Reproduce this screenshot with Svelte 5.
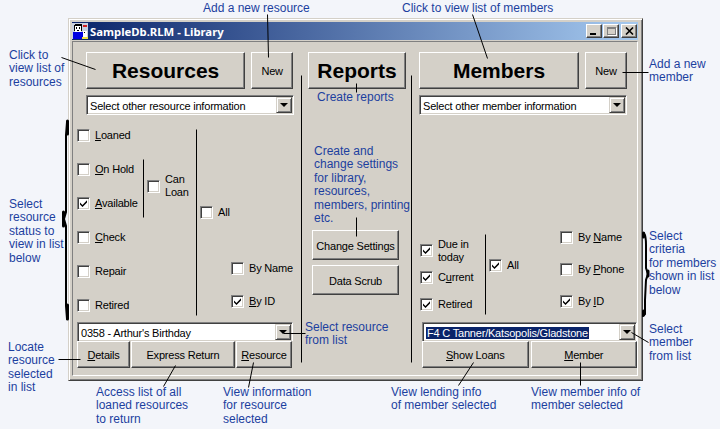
<script>
  const notes = [
    { x: 203, y: 2, text: 'Add a new resource' },
    { x: 402, y: 2, text: 'Click to view list of members' },
    { x: 9, y: 49, text: 'Click to\nview list of\nresources' },
    { x: 649, y: 58, text: 'Add a new\nmember' },
    { x: 317, y: 91, text: 'Create reports' },
    { x: 314, y: 145, text: 'Create and\nchange settings\nfor library,\nresources,\nmembers, printing\netc.' },
    { x: 9, y: 198, text: 'Select\nresource\nstatus to\nview in list\nbelow' },
    { x: 649, y: 230, text: 'Select\ncriteria\nfor members\nshown in list\nbelow' },
    { x: 305, y: 321, text: 'Select resource\nfrom list' },
    { x: 649, y: 323, text: 'Select\nmember\nfrom list' },
    { x: 8, y: 341, text: 'Locate\nresource\nselected\nin list' },
    { x: 96, y: 386, text: 'Access list of all\nloaned resources\nto return' },
    { x: 223, y: 386, text: 'View information\nfor resource\nselected' },
    { x: 391, y: 386, text: 'View lending info\nof member selected' },
    { x: 531, y: 386, text: 'View member info of\nmember selected' }
  ];

  // leader lines, x1 y1 x2 y2
  const leaders = [
    [61, 57, 95, 69],
    [267, 14, 268, 57],
    [472, 14, 487, 58],
    [622, 72, 648, 72],
    [356, 83, 356, 92],
    [356, 217, 356, 236],
    [283, 333, 305, 333],
    [58, 359, 80, 359],
    [175, 365, 163, 386],
    [253, 362, 248, 387],
    [473, 362, 458, 385],
    [580, 362, 580, 385],
    [631, 332, 648, 342],
    [143, 159, 143, 217],
    [196, 129, 196, 315],
    [485, 234, 485, 314],
    [301, 75, 301, 362],
    [411, 75, 411, 362]
  ];
</script>

{#snippet box(checked = false)}
  <span class="box">
    {#if checked}
      <svg width="9" height="9" viewBox="0 0 9 9"><path d="M1 3.5 L3.5 6 L8 1.2 V3.4 L3.5 8 L1 5.6 Z" fill="#000" /></svg>
    {/if}
  </span>
{/snippet}

{#snippet arrow()}
  <span class="drop"><i></i></span>
{/snippet}

<div class="page">
  <div class="window">
    <div class="titlebar">
      <svg class="appicon" width="16" height="16" viewBox="0 0 16 16" shape-rendering="crispEdges">
        <rect width="16" height="16" fill="#c8d0e0" />
        <rect x="3" y="1" width="7" height="2" fill="#000" />
        <rect x="2" y="2" width="1" height="6" fill="#000" />
        <rect x="9" y="2" width="1" height="6" fill="#000" />
        <rect x="3" y="3" width="6" height="6" fill="#fff" />
        <rect x="4" y="4" width="1" height="2" fill="#000" />
        <rect x="7" y="4" width="1" height="2" fill="#000" />
        <rect x="5" y="7" width="2" height="1" fill="#000" />
        <rect x="1" y="9" width="10" height="7" fill="#0000e0" />
        <rect x="11" y="2" width="4" height="2" fill="#d02020" />
        <rect x="10" y="14" width="6" height="2" fill="#f0e040" />
        <rect x="11" y="8" width="4" height="6" fill="#fff" />
        <rect x="12" y="9" width="1" height="1" fill="#000" />
      </svg>
      <span class="title">SampleDb.RLM - Library</span>
      <div class="controls">
        <button class="ctl" aria-label="Minimize"><i class="min"></i></button>
        <button class="ctl" aria-label="Maximize"><i class="max"></i></button>
        <button class="ctl close" aria-label="Close">
          <svg width="9" height="8" viewBox="0 0 9 8"><path d="M1 0.5 L8 7.5 M8 0.5 L1 7.5" stroke="#000" stroke-width="1.6" /></svg>
        </button>
      </div>
    </div>

    <div class="client">
      <section class="col left">
        <div class="head">
          <button class="btn big wide">Resources</button>
          <button class="btn new">New</button>
        </div>
        <div class="combo info"><span class="value">Select other resource information</span>{@render arrow()}</div>

        <div class="status">
          <label class="chk r1">{@render box()}<span><u>L</u>oaned</span></label>
          <label class="chk r2">{@render box()}<span><u>O</u>n Hold</span></label>
          <label class="chk r3">{@render box(true)}<span><u>A</u>vailable</span></label>
          <label class="chk r4">{@render box()}<span><u>C</u>heck</span></label>
          <label class="chk r5">{@render box()}<span>Repair</span></label>
          <label class="chk r6">{@render box()}<span>Retired</span></label>
          <label class="chk canloan">{@render box()}<span>Can<br />Loan</span></label>
          <label class="chk all">{@render box()}<span>All</span></label>
          <label class="chk byname">{@render box()}<span>By Name</span></label>
          <label class="chk byid">{@render box(true)}<span><u>B</u>y ID</span></label>
        </div>

        <div class="combo list"><span class="value">0358 - Arthur's Birthday</span>{@render arrow()}</div>
        <div class="actions">
          <button class="btn details"><u>D</u>etails</button>
          <button class="btn express">Express Return</button>
          <button class="btn resource"><u>R</u>esource</button>
        </div>
      </section>

      <section class="col middle">
        <button class="btn big reports">Reports</button>
        <button class="btn tool first">Change Settings</button>
        <button class="btn tool">Data Scrub</button>
      </section>

      <section class="col right">
        <div class="head">
          <button class="btn big wide">Members</button>
          <button class="btn new">New</button>
        </div>
        <div class="combo info"><span class="value">Select other member information</span>{@render arrow()}</div>

        <div class="criteria">
          <div class="group due">
            <label class="chk">{@render box(true)}<span>Due in<br />today</span></label>
            <label class="chk">{@render box(true)}<span>C<u>u</u>rrent</span></label>
            <label class="chk">{@render box(true)}<span>Retired</span></label>
          </div>
          <div class="group every">
            <label class="chk">{@render box(true)}<span>All</span></label>
          </div>
          <div class="group sort">
            <label class="chk">{@render box()}<span>By <u>N</u>ame</span></label>
            <label class="chk">{@render box()}<span>By <u>P</u>hone</span></label>
            <label class="chk">{@render box(true)}<span>By <u>I</u>D</span></label>
          </div>
        </div>

        <div class="combo list"><span class="value"><mark>F4 C Tanner/Katsopolis/Gladstone</mark></span>{@render arrow()}</div>
        <div class="actions">
          <button class="btn half"><u>S</u>how Loans</button>
          <button class="btn half"><u>M</u>ember</button>
        </div>
      </section>
    </div>
  </div>

  <svg class="overlay" width="720" height="429" viewBox="0 0 720 429">
    <g stroke="#000" stroke-width="1" fill="none">
      {#each leaders as [x1, y1, x2, y2]}
        <line x1={x1 + 0.5} y1={y1 + 0.5} x2={x2 + 0.5} y2={y2 + 0.5} />
      {/each}
    </g>
    <g stroke="#000" fill="none" stroke-linecap="round">
      <path d="M67 122 L66 135 V212 L64 219 L66 226 V306 L67 319" stroke-width="2" />
      <path d="M67.5 121 V134 M67.5 305 V319 M63.5 212 V226" stroke-width="3" />
      <path d="M644 233 Q646 236 646 245 V268 L648 274 L646 280 L645 300 V314 L643 316" stroke-width="2" />
      <path d="M643.5 233 V237 M643.5 311 V315 M648 271 V276" stroke-width="3" />
    </g>
  </svg>

  {#each notes as note}
    <div class="note" style="left: {note.x}px; top: {note.y}px">{note.text}</div>
  {/each}
</div>

<style>
  :global(body) {
    margin: 0;
    background: #f3f5fa;
  }
  .page {
    position: relative;
    width: 720px;
    height: 429px;
    overflow: hidden;
    background: #f3f5fa;
    font-family: "Liberation Sans", Arial, sans-serif;
  }
  .note {
    position: absolute;
    white-space: pre;
    font-size: 12px;
    line-height: 13.4px;
    color: #1c3f9f;
  }
  .overlay {
    position: absolute;
    left: 0;
    top: 0;
    pointer-events: none;
  }

  .window {
    position: absolute;
    left: 68px;
    top: 18px;
    width: 575px;
    height: 363px;
    box-sizing: border-box;
    display: flex;
    flex-direction: column;
    padding: 3px 4px 4px 3px;
    background: #d4d0c8;
    border: 1px solid;
    border-color: #d4d0c8 #404040 #404040 #d4d0c8;
    box-shadow: inset 1px 1px #fff, inset -1px -1px #808080;
    font-size: 11px;
    letter-spacing: -0.2px;
    color: #000;
  }
  .titlebar {
    flex: none;
    height: 18px;
    display: flex;
    align-items: center;
    gap: 2px;
    background: linear-gradient(90deg, #0a246a, #a6caf0);
  }
  .appicon {
    flex: none;
  }
  .title {
    font-family: "Noto Sans", Tahoma, sans-serif;
    font-size: 11.3px;
    font-weight: 700;
    letter-spacing: 0;
    color: #fff;
  }
  .controls {
    margin-left: auto;
    display: flex;
    gap: 1px;
    padding-right: 1px;
  }
  .ctl {
    position: relative;
    width: 16px;
    height: 14px;
    padding: 0;
    display: grid;
    place-items: center;
    background: #d4d0c8;
    border: 1px solid;
    border-color: #fff #404040 #404040 #fff;
    box-shadow: inset -1px -1px #808080;
  }
  .close {
    margin-left: 1px;
  }
  .min {
    position: absolute;
    left: 3px;
    bottom: 2px;
    width: 6px;
    height: 2px;
    background: #000;
  }
  .max {
    width: 9px;
    height: 8px;
    box-sizing: border-box;
    border: 1px solid #808080;
    border-top-width: 2px;
    box-shadow: 1px 1px #fff;
  }

  .client {
    flex: 1;
    display: flex;
    margin-top: 1px;
    padding: 10px 0 0 4px;
    border-top: 1px solid #808080;
    border-left: 1px solid #808080;
    border-right: 1px solid #fff;
    border-bottom: 1px solid #fff;
    box-sizing: border-box;
    min-height: 0;
  }
  .col {
    display: flex;
    flex-direction: column;
    flex: none;
  }
  .left {
    width: 216px;
    margin-right: 15px;
  }
  .middle {
    width: 98px;
    margin-right: 13px;
  }
  .right {
    width: 218px;
  }

  .btn {
    box-sizing: border-box;
    padding: 0;
    font: inherit;
    letter-spacing: inherit;
    color: #000;
    text-align: center;
    white-space: nowrap;
    background: #d4d0c8;
    border: 1px solid;
    border-color: #fff #404040 #404040 #fff;
    box-shadow: inset -1px -1px #808080;
  }
  .btn u,
  .chk u {
    text-underline-offset: 1px;
  }
  .head {
    display: flex;
    gap: 6px;
    height: 37px;
  }
  .left .head {
    margin-left: 9px;
  }
  .big {
    font-size: 21px;
    font-weight: 700;
    letter-spacing: 0;
  }
  .wide {
    width: 160px;
  }
  .new {
    width: 42px;
  }
  .reports {
    width: 98px;
    height: 37px;
    flex: none;
  }
  .tool {
    width: 87px;
    height: 30px;
    margin: 5px 0 0 4px;
    padding-top: 2px;
    flex: none;
  }
  .first {
    margin-top: 141px;
  }

  .combo {
    display: flex;
    align-items: center;
    box-sizing: border-box;
    background: #fff;
    border: 1px solid;
    border-color: #808080 #fff #fff #808080;
    box-shadow: inset 1px 1px #404040, inset -1px -1px #d4d0c8;
    white-space: nowrap;
  }
  .value {
    flex: 1;
    min-width: 0;
    padding: 1px 0 0 3px;
  }
  .info {
    width: 208px;
    height: 20px;
    margin-top: 6px;
  }
  .info .value {
    padding-top: 2px;
  }
  .left .info {
    margin-left: 9px;
  }
  .list {
    flex: none;
    height: 19px;
  }
  .left .list {
    width: 216px;
    border-bottom: 0;
  }
  .right .list {
    width: 215px;
    margin-left: 3px;
    border-bottom: 0;
  }
  mark {
    background: #0a246a;
    color: #fff;
    padding: 0 1px;
  }
  .drop {
    flex: none;
    align-self: stretch;
    width: 16px;
    margin: 1px;
    display: grid;
    place-items: center;
    box-sizing: border-box;
    background: #d4d0c8;
    border: 1px solid;
    border-color: #d4d0c8 #404040 #404040 #d4d0c8;
    box-shadow: inset 1px 1px #fff, inset -1px -1px #808080;
  }
  .drop i {
    width: 0;
    height: 0;
    border: 4px solid transparent;
    border-top: 4px solid #000;
    border-bottom: 0;
  }

  .chk {
    display: flex;
    align-items: center;
    gap: 5px;
    line-height: 13px;
    white-space: nowrap;
  }
  .box {
    flex: none;
    width: 13px;
    height: 13px;
    box-sizing: border-box;
    display: grid;
    place-items: center;
    background: #fff;
    border: 1px solid;
    border-color: #808080 #fff #fff #808080;
    box-shadow: inset 1px 1px #404040, inset -1px -1px #d4d0c8;
  }

  .status {
    flex: none;
    display: grid;
    grid-template-columns: 66px 53px 35px 1fr;
    grid-template-rows: repeat(6, 34px);
    margin-top: 3px;
  }
  .r1 { grid-area: 1 / 1; }
  .r2 { grid-area: 2 / 1; }
  .r3 { grid-area: 3 / 1; }
  .r4 { grid-area: 4 / 1; }
  .r5 { grid-area: 5 / 1; }
  .r6 { grid-area: 6 / 1; }
  .canloan {
    grid-area: 2 / 2 / 4 / 3;
    padding-left: 4px;
  }
  .all {
    grid-area: 3 / 3 / 4 / 5;
    margin-top: 18px;
    padding-left: 4px;
  }
  .byname {
    grid-area: 5 / 4;
    margin-bottom: 6px;
  }
  .byid {
    grid-area: 6 / 4;
    margin-bottom: 8px;
  }

  .criteria {
    flex: none;
    height: 204px;
    margin-top: 3px;
    display: flex;
    align-items: flex-end;
  }
  .group {
    display: flex;
    flex-direction: column;
  }
  .due {
    width: 70px;
    padding: 0 0 4px 1px;
    box-sizing: border-box;
  }
  .due .chk {
    height: 27px;
  }
  .every {
    width: 71px;
    padding-bottom: 50px;
  }
  .sort {
    padding-bottom: 5px;
  }
  .sort .chk {
    height: 32px;
  }

  .actions {
    flex: none;
    display: flex;
    height: 27px;
    gap: 1px;
  }
  .details {
    width: 53px;
  }
  .express {
    width: 104px;
  }
  .resource {
    width: 56px;
  }
  .right .actions {
    margin-left: 3px;
    gap: 2px;
  }
  .half {
    width: 106.5px;
  }
</style>
